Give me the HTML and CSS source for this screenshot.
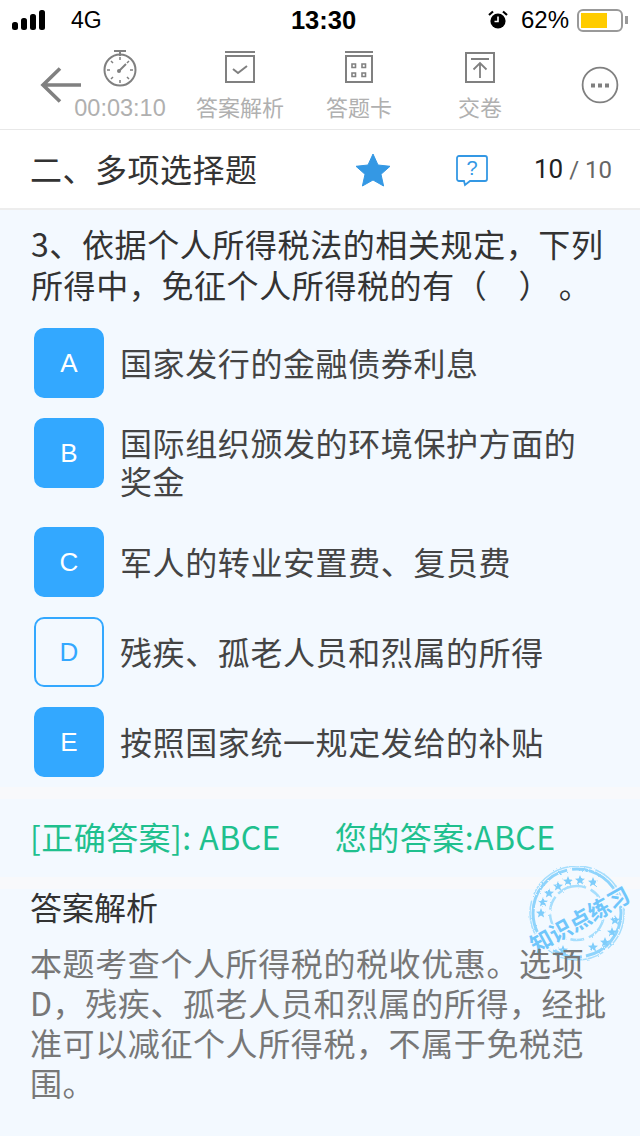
FILE: index.html
```html
<!DOCTYPE html>
<html lang="zh">
<head>
  <meta charset="UTF-8">
  <meta name="viewport" content="width=device-width, initial-scale=1.0">
  <title>多项选择题</title>
  <link rel="stylesheet" href="styles.css">
</head>
<body>

<div class="page">
  <!-- status bar -->
  <div class="status-bar">
    <div class="status-left">
      <svg class="signal" width="34" height="22" viewBox="0 0 34 22">
        <rect x="0" y="13" width="6" height="8" rx="2.500" fill="#000"/>
        <rect x="9" y="9" width="6" height="12" rx="2.500" fill="#000"/>
        <rect x="18" y="5" width="6" height="16" rx="2.500" fill="#000"/>
        <rect x="27" y="1" width="6" height="20" rx="2.500" fill="#000"/>
      </svg>
      <span class="carrier">4G</span>
    </div>
    <div class="clock">13:30</div>
    <div class="status-right">
      <svg width="20" height="20" viewBox="0 0 20 20">
        <circle cx="10" cy="11" r="7.600" fill="#000"/>
        <path d="M10 6.500v5h-3.500" fill="none" stroke="#fff" stroke-width="1.600"/>
        <path d="M1 5l4-3.500M19 5l-4-3.500" stroke="#000" stroke-width="2.200"/>
      </svg>
      <span class="percent">62%</span>
      <div class="battery"><div class="battery-fill"></div></div>
      <div class="battery-tip"></div>
    </div>
  </div>

  <!-- toolbar -->
  <div class="toolbar">
    <svg class="back" width="44" height="36" viewBox="0 0 44 36">
      <path d="M42 18H4M21 1.500L4 18l17 16.500" fill="none" stroke="#808080" stroke-width="3.600"/>
    </svg>
    <div class="tool tool-time">
      <svg width="36" height="38" viewBox="0 0 36 38">
        <path d="M12 2h12M18 2v5" stroke="#808080" stroke-width="2" fill="none"/>
        <circle cx="18" cy="21" r="15.500" fill="none" stroke="#808080" stroke-width="2"/>
        <path d="M18 8v3M18 31v3M5 21h3M28 21h3M9 12l2 2M25 28l2 2M27 12l-2 2M9 30l2-2" stroke="#808080" stroke-width="1.500"/>
        <path d="M17 22l7-7" stroke="#808080" stroke-width="2"/>
        <circle cx="17" cy="22" r="2" fill="#808080"/>
      </svg>
      <span class="tool-label">00:03:10</span>
    </div>
    <div class="tool tool-analysis">
      <svg width="32" height="36" viewBox="0 0 32 36">
        <path d="M1 3h30" stroke="#808080" stroke-width="2"/>
        <rect x="2" y="7" width="28" height="26" fill="none" stroke="#808080" stroke-width="2"/>
        <path d="M9 20l5 4 9-7" fill="none" stroke="#808080" stroke-width="2"/>
      </svg>
      <span class="tool-label">答案解析</span>
    </div>
    <div class="tool tool-card">
      <svg width="30" height="36" viewBox="0 0 30 36">
        <path d="M1 3h28" stroke="#808080" stroke-width="2"/>
        <rect x="2" y="7" width="26" height="26" fill="none" stroke="#808080" stroke-width="2"/>
        <path d="M8 15h3.500v3.500H8zM18 15h3.500v3.500H18zM8 24h3.500v3.500H8zM18 24h3.500v3.500H18z" fill="none" stroke="#808080" stroke-width="1.600"/>
      </svg>
      <span class="tool-label">答题卡</span>
    </div>
    <div class="tool tool-submit">
      <svg width="32" height="36" viewBox="0 0 32 36">
        <rect x="2" y="4" width="28" height="29" fill="none" stroke="#808080" stroke-width="2"/>
        <path d="M7 10h18M16 29V14M9.500 20.500L16 14l6.500 6.500" fill="none" stroke="#808080" stroke-width="1.800"/>
      </svg>
      <span class="tool-label">交卷</span>
    </div>
    <svg class="more" width="38" height="38" viewBox="0 0 38 38">
      <circle cx="19" cy="19" r="17.400" fill="none" stroke="#808080" stroke-width="1.800"/>
      <rect x="10" y="17.500" width="4" height="4" fill="#808080"/>
      <rect x="17" y="17.500" width="4" height="4" fill="#808080"/>
      <rect x="24" y="17.500" width="4" height="4" fill="#808080"/>
    </svg>
  </div>

  <!-- title row -->
  <div class="title-row">
    <div class="section-title">二、多项选择题</div>
    <svg class="star" width="36" height="34" viewBox="0 0 36 34">
      <path d="M18 1l5 11 12 1.300-9 8 2.600 11.700L18 27l-10.600 6L10 21.300l-9-8L13 12z" fill="#3498e4" stroke="#3498e4" stroke-linejoin="round"/>
    </svg>
    <svg class="ask" width="32" height="32" viewBox="0 0 32 32">
      <path d="M3 1h26a2 2 0 0 1 2 2v21a2 2 0 0 1-2 2H14l-5 4-1-4H3a2 2 0 0 1-2-2V3a2 2 0 0 1 2-2z" fill="none" stroke="#3498e4" stroke-width="1.800"/>
      <text x="16" y="20" class="ask-mark">?</text>
    </svg>
    <div class="progress"><span class="progress-now">10</span> / 10</div>
  </div>

  <!-- question -->
  <div class="question">3、依据个人所得税法的相关规定，下列所得中，免征个人所得税的有（&nbsp;&nbsp;&nbsp;&nbsp;）&nbsp;。</div>

  <div class="options">
    <div class="option">
      <div class="letter selected">A</div>
      <div class="option-text">国家发行的金融债券利息</div>
    </div>
    <div class="option">
      <div class="letter selected">B</div>
      <div class="option-text">国际组织颁发的环境保护方面的奖金</div>
    </div>
    <div class="option">
      <div class="letter selected">C</div>
      <div class="option-text">军人的转业安置费、复员费</div>
    </div>
    <div class="option">
      <div class="letter">D</div>
      <div class="option-text">残疾、孤老人员和烈属的所得</div>
    </div>
    <div class="option">
      <div class="letter selected">E</div>
      <div class="option-text">按照国家统一规定发给的补贴</div>
    </div>
  </div>

  <div class="answer-row">
    <span class="answer-right">[正确答案]: ABCE</span>
    <span class="answer-mine">您的答案:ABCE</span>
  </div>

  <!-- stamp sits behind the analysis text -->
  <svg class="stamp" width="122" height="110" viewBox="0 0 122 110">
    <defs>
      <path id="stampStar" d="M0-5l1.400 3.400 3.600.3-2.800 2.300.9 3.500L0 2.600-3.100 4.500l.9-3.500L-5-1.300l3.600-.3z"/>
      <filter id="rough" x="-5%" y="-5%" width="110%" height="110%">
        <feTurbulence type="fractalNoise" baseFrequency="0.5" numOctaves="2" seed="4"/>
        <feDisplacementMap in="SourceGraphic" scale="2.500"/>
      </filter>
    </defs>
    <g filter="url(#rough)">
      <circle cx="59" cy="47" r="47" fill="none" stroke="#a6defd" stroke-width="1.500" stroke-dasharray="40 6 70 4"/>
      <circle cx="59" cy="47" r="44" fill="none" stroke="#8fd4fc" stroke-width="3" stroke-dasharray="60 4 30 3 100 5"/>
      <circle cx="59" cy="47" r="27" fill="none" stroke="#a6defd" stroke-width="2.500" stroke-dasharray="30 5 14 4"/>
      <g class="stamp-stars">
        <use href="#stampStar" x="23" y="47"/>
        <use href="#stampStar" x="25" y="36"/>
        <use href="#stampStar" x="31" y="27"/>
        <use href="#stampStar" x="40" y="20"/>
        <use href="#stampStar" x="50" y="15"/>
        <use href="#stampStar" x="62" y="14"/>
        <use href="#stampStar" x="75" y="16"/>
        <use href="#stampStar" x="97" y="54"/>
        <use href="#stampStar" x="94" y="66"/>
        <use href="#stampStar" x="87" y="76"/>
        <use href="#stampStar" x="75" y="81"/>
        <use href="#stampStar" x="45" y="84"/>
      </g>
    </g>
    <text class="stamp-text" x="62" y="62" text-anchor="middle" transform="rotate(-29 62 54)">知识点练习</text>
  </svg>

  <div class="analysis">
    <div class="analysis-title">答案解析</div>
    <div class="analysis-text">本题考查个人所得税的税收优惠。选项D，残疾、孤老人员和烈属的所得，经批准可以减征个人所得税，不属于免税范围。</div>
  </div>
</div>

</body>
</html>
```

FILE: styles.css
```css
body {
  margin: 0;
  padding: 0;
  font-family: "Noto Sans CJK SC", "Liberation Sans", sans-serif;
}
.page {
  position: relative;
  width: 640px;
  height: 1136px;
  overflow: hidden;
  background-color: #f3f9ff;
}
.status-bar {
  height: 40px;
  background-color: #fff;
  display: flex;
  align-items: center;
  justify-content: space-between;
  padding: 0 12px;
  font-family: "Liberation Sans", sans-serif;
  font-size: 24px;
  color: #000;
}
.status-left {
  width: 220px;
  display: flex;
  align-items: center;
}
.carrier {
  margin-left: 25px;
  font-size: 23px;
}
.clock {
  margin-left: 7px;
  font-weight: bold;
  font-size: 25.500px;
}
.status-right {
  width: 220px;
  display: flex;
  align-items: center;
  justify-content: flex-end;
}
.percent {
  margin: 0 8px 0 13px;
}
.battery {
  width: 46px;
  height: 23px;
  box-sizing: border-box;
  border: 2px solid #999;
  border-radius: 6px;
  padding: 2px;
}
.battery-fill {
  width: 26px;
  height: 15px;
  background-color: #fc0;
}
.battery-tip {
  width: 3px;
  height: 8px;
  margin-left: 2px;
  background-color: #999;
}
.toolbar {
  position: relative;
  height: 89px;
  background-color: #fff;
  border-bottom: 1px solid #e8e8e8;
}
.back {
  display: block;
  margin-left: 39px;
  padding-top: 27px;
}
.tool {
  position: absolute;
  top: 9px;
  width: 110px;
  height: 71px;
  display: flex;
  flex-direction: column;
  align-items: center;
  justify-content: space-between;
}
.tool-time { left: 65px; }
.tool-analysis { left: 185px; }
.tool-card { left: 304px; }
.tool-submit { left: 425px; }
.tool-label {
  font-size: 22px;
  line-height: 28px;
  color: #b0b0b0;
}
.tool-time .tool-label {
  margin-bottom: -2px;
  font-family: "Liberation Sans", sans-serif;
  font-size: 23.500px;
}
.more {
  position: absolute;
  left: 581px;
  top: 26px;
}
.title-row {
  height: 78px;
  background-color: #fff;
  border-bottom: 2px solid #ededed;
  display: flex;
  align-items: center;
  padding-left: 30px;
}
.section-title {
  width: 325px;
  font-size: 32px;
  line-height: 40px;
  letter-spacing: 0.500px;
  color: #333;
  margin-top: -2px;
}
.star {
  margin-top: 2px;
}
.ask {
  margin-left: 65px;
  margin-top: 4px;
}
.ask-mark {
  font-family: "Liberation Sans", sans-serif;
  font-size: 20px;
  text-anchor: middle;
  fill: #3498e4;
}
.progress {
  margin-left: 46px;
  font-family: Roboto, sans-serif;
  font-size: 24px;
  color: #666;
}
.progress-now {
  font-size: 26px;
  color: #222;
}
.question {
  padding: 13px 30px 0 31px;
  font-size: 32px;
  line-height: 41px;
  letter-spacing: 0.600px;
  color: #333;
}
.options {
  padding: 23px 30px 0 34px;
}
.option {
  display: flex;
  align-items: center;
  margin-bottom: 20px;
}
.option:last-child {
  margin-bottom: 10px;
}
.letter {
  flex: none;
  align-self: flex-start;
  width: 70px;
  height: 70px;
  box-sizing: border-box;
  border: 2px solid #33a8ff;
  border-radius: 10px;
  display: flex;
  align-items: center;
  justify-content: center;
  font-family: "Liberation Sans", sans-serif;
  font-size: 26px;
  color: #33a8ff;
}
.letter.selected {
  background-color: #33a8ff;
  color: #fff;
}
.option-text {
  max-width: 470px;
  margin-left: 16px;
  padding: 5px 0 8px;
  font-size: 32px;
  line-height: 38px;
  letter-spacing: 0.600px;
  color: #444;
}
.answer-row {
  border-top: 12px solid #f8f9fb;
  border-bottom: 12px solid #f8f9fb;
  height: 74px;
  display: flex;
  align-items: center;
  padding: 0 0 4px 30px;
  font-size: 32px;
  letter-spacing: 0.450px;
  color: #1fc08e;
}
.answer-mine {
  margin-left: 54px;
}
.analysis {
  position: relative;
  padding: 1px 30px 0;
}
.analysis-title {
  padding-bottom: 20px;
  font-size: 32px;
  line-height: 32px;
  color: #333;
}
.analysis-text {
  font-size: 32px;
  line-height: 40px;
  letter-spacing: 0.600px;
  color: #777;
}
.stamp {
  position: absolute;
  left: 518px;
  top: 866px;
}
.stamp-stars {
  fill: #7fcdfb;
}
.stamp-text {
  font-weight: bold;
  font-size: 22px;
  fill: #6fc6fb;
  stroke: #f3f9ff;
  stroke-width: 3px;
  paint-order: stroke;
}
```
